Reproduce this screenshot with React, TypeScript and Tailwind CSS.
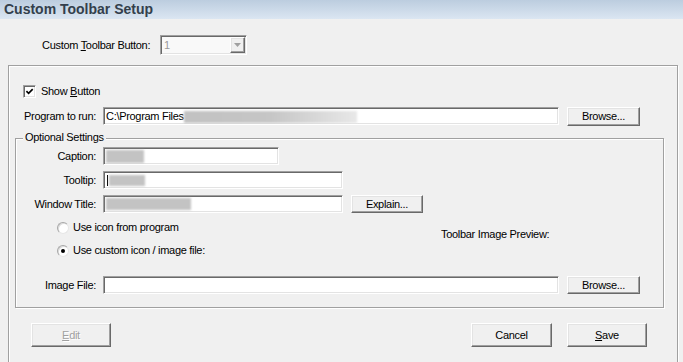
import type { ReactNode } from "react";

const sunken =
  "border border-t-[#a0a0a0] border-l-[#a0a0a0] border-r-white border-b-white shadow-[inset_1px_1px_0_#696969,inset_-1px_-1px_0_#e3e3e3]";
const raised =
  "border border-t-white border-l-white border-r-[#696969] border-b-[#696969] shadow-[inset_-1px_-1px_0_#a0a0a0,inset_1px_1px_0_#e3e3e3] bg-[#f0f0f0]";
const etched = "border border-[#a0a0a0] shadow-[inset_1px_1px_0_#fff,1px_1px_0_#fff]";

function Btn({ className = "", children }: { className?: string; children: ReactNode }) {
  return (
    <button type="button" className={`${raised} flex items-center justify-center shrink-0 ${className}`}>
      {children}
    </button>
  );
}

function Field({ className = "", children }: { className?: string; children?: ReactNode }) {
  return (
    <div className={`${sunken} bg-white h-[18px] flex items-center pl-[2px] shrink-0 overflow-hidden ${className}`}>
      {children}
    </div>
  );
}

function Blur({ className }: { className: string }) {
  return <span className={`block bg-[#c3c3c3] blur-[1px] ${className}`} />;
}

function Radio({ checked, children }: { checked?: boolean; children: ReactNode }) {
  return (
    <div className="flex items-center gap-[4px] h-[13px]">
      <span className="w-[12px] h-[12px] rounded-full bg-white border border-[#a7a7a7] border-b-[#e6e6e6] border-r-[#e6e6e6] shadow-[inset_1px_1px_0_#dcdcdc] flex items-center justify-center">
        {checked && <span className="w-[4px] h-[4px] rounded-full bg-black" />}
      </span>
      <span>{children}</span>
    </div>
  );
}

export default function App() {
  return (
    <div className="w-[683px] h-[362px] overflow-hidden bg-[#f0f0f0] text-black text-[11px] leading-[13px] tracking-[-0.3px] font-['Liberation_Sans',Arial,sans-serif]">
      <div className="h-[19px] flex items-center pl-[4px] bg-linear-to-b from-[#bccddf] to-[#dbe6f2] text-[14px] font-bold tracking-normal text-[#333f4c]">
        Custom Toolbar Setup
      </div>

      <div className="mt-[16px] flex items-center h-[20px] pl-[42px]">
        <span className="w-[118px]">
          Custom <u>T</u>oolbar Button:
        </span>
        <div className={`${sunken} w-[87px] h-[20px] bg-[#f9f9f9] flex items-center`}>
          <span className="flex-1 pl-[3px] text-[#9a9a9a]">1</span>
          <div className={`${raised} w-[15px] h-[16px] mr-[1px] flex items-center justify-center`}>
            <svg width="7" height="4" viewBox="0 0 7 4">
              <path d="M0 0h7L3.5 4z" fill="#a0a0a0" />
            </svg>
          </div>
        </div>
      </div>

      <div className={`${etched} mt-[10px] ml-[8px] w-[670px] h-[320px]`}>
        <div className="mt-[19px] ml-[14px] flex items-center gap-[5px] h-[13px]">
          <div className={`${sunken} w-[13px] h-[13px] bg-white flex items-center justify-center`}>
            <svg width="9" height="9" viewBox="0 0 9 9">
              <path d="M1.4 4.1 3.6 6.3 7.7 2.1" fill="none" stroke="#000" strokeWidth="1.7" />
            </svg>
          </div>
          <span>
            Show <u>B</u>utton
          </span>
        </div>

        <div className="mt-[9px] flex items-start h-[19px]">
          <span className="w-[87px] text-right leading-[18px]">Program to run:</span>
          <Field className="ml-[7px] w-[456px]">
            <span className="whitespace-nowrap">C:\Program Files</span>
            <span className="block h-[12px] w-[173px] mt-[2px] bg-linear-to-r from-[#c2c2c2] via-[#c6c6c6] to-[#e8e8e8] blur-[1px]" />
          </Field>
          <Btn className="ml-[8px] w-[73px] h-[19px]">Browse...</Btn>
        </div>

        <div className={`${etched} relative mt-[12px] ml-[6px] w-[649px] h-[170px]`}>
          <span className="absolute -top-[8px] left-[7px] px-[2px] bg-[#f0f0f0]">Optional Settings</span>

          <div className="mt-[8px] flex items-start">
            <span className="w-[80px] text-right leading-[18px]">Caption:</span>
            <Field className="ml-[7px] w-[176px]">
              <Blur className="w-[38px] h-[13px]" />
            </Field>
          </div>

          <div className="mt-[6px] flex items-start">
            <span className="w-[80px] text-right leading-[18px]">Tooltip:</span>
            <Field className="ml-[7px] w-[240px]">
              <span className="block w-[1px] h-[11px] bg-black ml-[1px]" />
              <Blur className="ml-[1px] w-[36px] h-[11px]" />
            </Field>
          </div>

          <div className="mt-[6px] flex items-start">
            <span className="w-[80px] text-right leading-[18px]">Window Title:</span>
            <Field className="ml-[7px] w-[240px]">
              <Blur className="w-[85px] h-[12px]" />
            </Field>
            <Btn className="ml-[8px] w-[72px] h-[18px]">Explain...</Btn>
          </div>

          <div className="mt-[8px] flex">
            <div className="pl-[41px] w-[425px] flex flex-col gap-[10px]">
              <Radio>Use icon from program</Radio>
              <Radio checked>Use custom icon / image file:</Radio>
            </div>
            <span className="mt-[7px]">Toolbar Image Preview:</span>
          </div>

          <div className="mt-[19px] flex items-start">
            <span className="w-[80px] text-right leading-[18px]">Image File:</span>
            <Field className="ml-[7px] w-[456px]" />
            <Btn className="ml-[8px] w-[73px] h-[18px]">Browse...</Btn>
          </div>
        </div>

        <div className="mt-[15px] flex">
          <Btn className="ml-[22px] w-[80px] h-[24px] text-[#a0a0a0] [text-shadow:1px_1px_0_#fff]">
            <span>
              <u>E</u>dit
            </span>
          </Btn>
          <Btn className="ml-auto w-[81px] h-[24px]">Cancel</Btn>
          <Btn className="ml-[15px] mr-[30px] w-[80px] h-[24px]">
            <span>
              <u>S</u>ave
            </span>
          </Btn>
        </div>
      </div>
    </div>
  );
}
